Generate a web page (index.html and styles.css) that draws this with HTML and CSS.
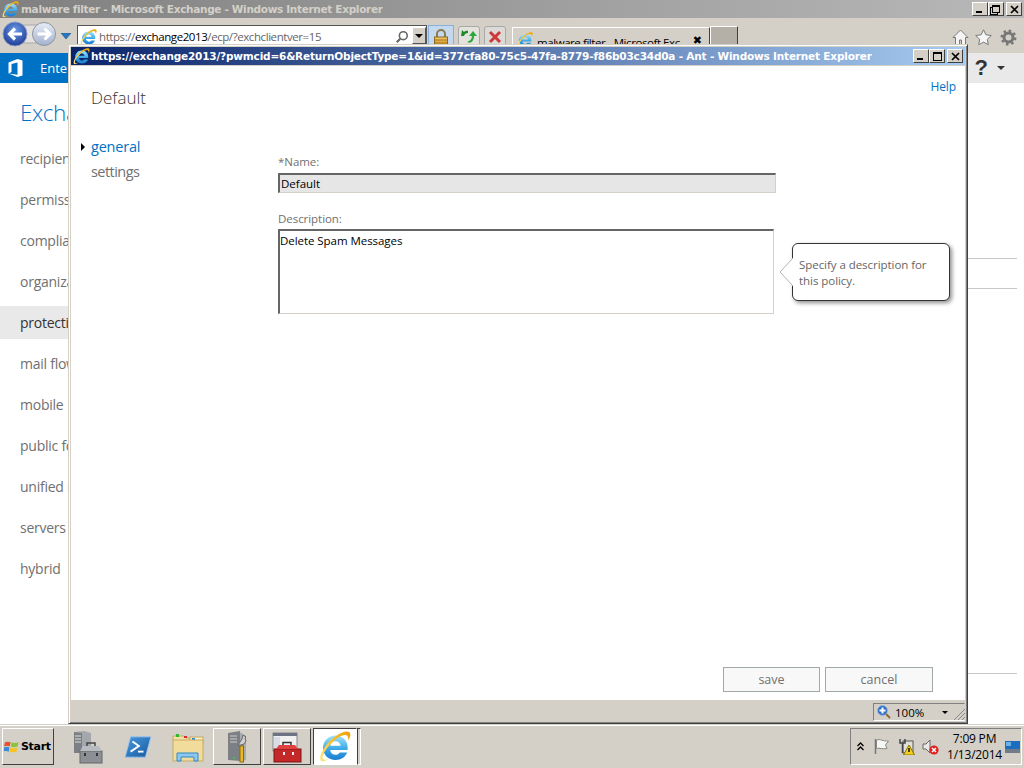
FILE: index.html
```html
<!DOCTYPE html>
<html lang="en">
<head>
<meta charset="utf-8">
<title>Default</title>
<link rel="stylesheet" href="styles.css">
</head>
<body>
<svg class="defs" width="0" height="0" aria-hidden="true">
  <defs>
    <linearGradient id="ieBlue" x1="0" y1="0" x2="0" y2="1"><stop offset="0" stop-color="#a4e4fc"/><stop offset=".55" stop-color="#3aa8e8"/><stop offset="1" stop-color="#1a7cd0"/></linearGradient>
    <linearGradient id="ieGold" x1="1" y1="0" x2="0" y2="1"><stop offset="0" stop-color="#f0a000"/><stop offset=".5" stop-color="#f8c430"/><stop offset="1" stop-color="#ffe680"/></linearGradient>
    <radialGradient id="navBlue" cx=".5" cy=".35" r=".75"><stop offset="0" stop-color="#6c9ce8"/><stop offset="1" stop-color="#142c88"/></radialGradient>
    <linearGradient id="navGray" x1="0" y1="0" x2="0" y2="1"><stop offset="0" stop-color="#e6ecf6"/><stop offset="1" stop-color="#a4b2d0"/></linearGradient>
    <linearGradient id="lockG" x1="0" y1="0" x2="0" y2="1"><stop offset="0" stop-color="#f2c86a"/><stop offset="1" stop-color="#c88a20"/></linearGradient>
    <linearGradient id="psG" x1="0" y1="0" x2="1" y2="1"><stop offset="0" stop-color="#4a9ae0"/><stop offset="1" stop-color="#16599c"/></linearGradient>
    <symbol id="ie" viewBox="0 0 32 32">
      <path d="M16.500 4.500C9.500 4.500 4 10 4 17s5.500 12 12.500 12c5.500 0 9.800-2.900 11.700-7.500h-7.400c-1 1.500-2.500 2.300-4.300 2.300-2.900 0-5-1.900-5.300-4.800h17.300c.1-.8.200-1.600.2-2.500C28.700 9.600 23.500 4.500 16.500 4.500zm-5.200 10.300c.4-2.700 2.500-4.500 5.200-4.500s4.800 1.800 5.200 4.500z" fill="url(#ieBlue)"/>
      <path d="M2.200 30.300C-.5 27.500 2.500 20 8.500 12.500 16 4 26-1.500 30 1c2.300 1.500 1.400 5-.7 8.500.1-2.800-.5-4.800-2-5.300-3.500-1.200-10.500 3-16.300 9.500-6 6.800-8.700 12.500-6.800 14.500 1 1 3 .7 5.800-.7-3.500 2.500-6.300 3.500-7.800 2.800z" fill="url(#ieGold)"/>
    </symbol>
  </defs>
</svg>

<div class="screen">
  <div class="browser">
    <div class="titlebar inactive">
      <svg class="ti"><use href="#ie"/></svg>
      <span class="title-text">malware filter - Microsoft Exchange - Windows Internet Explorer</span>
      <div class="winbtns">
        <span class="wb"><i class="g-min"></i></span><span class="wb"><i class="g-res"></i></span><span class="wb"><svg width="9" height="9" viewBox="0 0 9 9"><path d="M1 1l7 7M8 1L1 8" stroke="#000" stroke-width="1.700"/></svg></span>
      </div>
    </div>
    <div class="toolbar">
      <svg class="nav" width="60" height="30" viewBox="0 0 60 30">
        <rect x="12" y="6" width="32" height="18" rx="6" fill="#e4e2de" stroke="#a8a8a8"/>
        <circle cx="43" cy="15" r="11.500" fill="url(#navGray)" stroke="#8f949e"/>
        <path d="M36.500 15h12m-5-5.500l5.500 5.500-5.500 5.500" fill="none" stroke="#fff" stroke-width="3"/>
        <circle cx="14" cy="15" r="12" fill="url(#navBlue)" stroke="#8c9cc4"/>
        <path d="M21 15H8.500m5.500-5.500L8.500 15l5.500 5.500" fill="none" stroke="#fff" stroke-width="3.200"/>
      </svg>
      <svg class="drop" width="10" height="6" viewBox="0 0 10 6"><path d="M0 0h10L5 6z" fill="#2a78c0" stroke="#10508c" stroke-width=".6"/></svg>
      <div class="addr">
        <svg class="addr-ie"><use href="#ie"/></svg>
        <span class="url">https://<b>exchange2013</b><em>/ecp/?exchclientver=15</em></span>
        <svg class="mag" width="14" height="16" viewBox="0 0 16 16"><circle cx="9.500" cy="6.500" r="4.500" fill="#fff" stroke="#666" stroke-width="1.800"/><path d="M6 10l-4 4" stroke="#666" stroke-width="2.400"/></svg>
        <span class="addr-drop"><i class="tri"></i></span>
      </div>
      <div class="lock">
        <svg width="16" height="20" viewBox="0 0 16 20"><path d="M4 9V6a4 4 0 0 1 8 0v3" fill="none" stroke="#8a7a50" stroke-width="2"/><rect x="1.500" y="9" width="13" height="10" fill="url(#lockG)" stroke="#8a6a20"/><path d="M2 12h12M2 15h12" stroke="#a87818"/></svg>
      </div>
      <div class="tbtn"><svg width="16" height="15" viewBox="0 0 16 15"><path d="M7 3C5 3 3.500 4 3 6H0l1-6 2 2C4 1 6 .5 7 1z" fill="#1f8a2c"/><path d="M13 6l3 0-4-5-4 5h3c0 3-2 5-5 6 4 2 7-1 7-6z" fill="#2aa83a"/></svg></div>
      <div class="tbtn stop"><svg width="14" height="14" viewBox="0 0 14 14"><path d="M2 2l10 10M12 2L2 12" stroke="#cc3a3a" stroke-width="3"/></svg></div>
      <div class="tab">
        <svg class="tab-ie"><use href="#ie"/></svg>
        <span class="tab-text">malware filter - Microsoft Exc</span>
        <span class="tab-x">✖</span>
      </div>
      <div class="newtab"></div>
      <div class="tools">
        <svg width="17" height="17" viewBox="0 0 17 17"><path d="M8.500 1L1 8.500h2.500V16h4v-5h2v5h4V8.500H16z" fill="#f4f4f4" stroke="#7a7a7a"/></svg>
        <svg width="17" height="17" viewBox="0 0 17 17"><path d="M8.500 .8l2.400 5 5.400.7-4 3.800 1 5.400-4.800-2.600-4.800 2.600 1-5.400-4-3.800 5.400-.7z" fill="#f6f6f6" stroke="#7a7a7a"/></svg>
        <svg width="17" height="17" viewBox="0 0 17 17"><circle cx="8.500" cy="8.500" r="4.500" fill="none" stroke="#777" stroke-width="3"/><circle cx="8.500" cy="8.500" r="6.800" fill="none" stroke="#777" stroke-width="2.400" stroke-dasharray="2.500 2.840"/></svg>
      </div>
    </div>
    <div class="page">
      <div class="o365">
        <div class="o365-left">
          <svg class="office" width="17" height="18" viewBox="0 0 16 18"><path d="M1 3.500L10 0l5 1.500v15L10 18 1 14.500l9 1.200V3.500L4 5v8l-3 1.500z" fill="#fff"/></svg>
          <span class="ent">Enterprise</span>
        </div>
        <div class="o365-right"><span class="help-q">?</span><i class="help-tri"></i></div>
      </div>
      <div class="content">
        <nav class="side">
          <h1>Exchange admin center</h1>
          <ul>
            <li>recipients</li>
            <li>permissions</li>
            <li>compliance management</li>
            <li>organization</li>
            <li class="sel">protection</li>
            <li>mail flow</li>
            <li>mobile</li>
            <li>public folders</li>
            <li>unified messaging</li>
            <li>servers</li>
            <li>hybrid</li>
          </ul>
        </nav>
        <div class="rlines"><hr class="r1"><hr class="r2"><hr class="r3"></div>
      </div>
    </div>
  </div>

  <div class="taskbar">
    <button class="start">
      <svg width="16" height="14" viewBox="0 0 17 15"><path d="M1 2.500c2-1 4-1 6 0L6 7c-2-1-4-1-6 0z" fill="#e8502a"/><path d="M8 2.500c2 1 4 1 7.500 0L14.500 7c-3 1-5 1-7.500 0z" fill="#8cc43c"/><path d="M0 8c2-1 4-1 5.800 0L5 12.500c-2-1-4-1-6 0z" fill="#3a8ad8"/><path d="M6.800 8c2 1 4.500 1 7.500 0l-1 4.500c-3 1-5 1-7.300 0z" fill="#f6c228"/></svg>
      <span>Start</span>
    </button>
    <div class="apps">
      <span class="app"><svg width="30" height="34" viewBox="0 0 30 34"><path d="M1 2l10-1 7 2v20H1z" fill="#a4a8ac"/><path d="M1 2l8 1v20H1z" fill="#7c8084"/><path d="M2 6h6M2 9h6M2 12h6" stroke="#ddd"/><rect x="7" y="21" width="22" height="12" fill="#8c9094" stroke="#666"/><path d="M7 21h22l-3-5H10z" fill="#b8bcc0"/><path d="M14 16v-3h8v3" fill="none" stroke="#444" stroke-width="1.500"/><rect x="11" y="23" width="2" height="3" fill="#333"/><rect x="23" y="23" width="2" height="3" fill="#333"/></svg></span>
      <span class="app"><svg width="28" height="24" viewBox="0 0 30 26"><path d="M7 2h22l-6 22H1z" fill="url(#psG)" stroke="#9cc4ec"/><path d="M9 7l7 5-9 6" fill="none" stroke="#fff" stroke-width="2"/><path d="M15 18h6" stroke="#fff" stroke-width="2"/></svg></span>
      <span class="app"><svg width="32" height="30" viewBox="0 0 32 30"><path d="M1 4h11l2 2h13v3H1z" fill="#f4e0a4" stroke="#c4a860"/><rect x="18" y="5" width="13" height="6" fill="#faeec4" stroke="#c4a860"/><rect x="4" y="2" width="3" height="3" fill="#2eb82e"/><rect x="12" y="4" width="3" height="2" fill="#d83028"/><rect x="20" y="6" width="3" height="2" fill="#2a88d8"/><path d="M1 8h30v21H1z" fill="#f2dc9c" stroke="#c8ac60"/><path d="M5 29v-8h21v8h-4v-4H9v4z" fill="#8cc8f0" stroke="#3088c8"/></svg></span>
      <span class="app raised"><svg width="20" height="34" viewBox="0 0 20 34"><path d="M1 3l12-2v30l-12-1z" fill="#7c8084"/><path d="M3 6h7M3 9h7M3 12h7" stroke="#ccc"/><circle cx="7" cy="28" r="1" fill="#3c3"/><path d="M13 2l6 4v24l-6 2z" fill="#a8acb0"/><path d="M11 15l4-6 1-4 3 2-1 1 1 3-2 3-3 1z" fill="#d0d0d0" stroke="#666"/><rect x="13" y="16" width="3.500" height="16" fill="#e8b828" stroke="#8a6a10"/></svg></span>
      <span class="app raised"><svg width="30" height="32" viewBox="0 0 30 32"><rect x="1" y="2" width="24" height="18" fill="#f0f0f0" stroke="#888"/><rect x="1" y="2" width="24" height="3" fill="#6c7484"/><rect x="2" y="6" width="6" height="13" fill="#d8dce4"/><rect x="2" y="18" width="27" height="13" fill="#c42828" stroke="#7c1414"/><path d="M4 18l3-4h16l3 4z" fill="#e04040"/><path d="M11 14v-2.500h8V14" fill="none" stroke="#333" stroke-width="1.500"/><rect x="11" y="21" width="2" height="3" fill="#eee"/><rect x="20" y="21" width="2" height="3" fill="#eee"/></svg></span>
      <span class="app active"><svg width="32" height="32"><use href="#ie"/></svg></span>
      <span class="sliver"></span>
    </div>
    <div class="tray">
      <svg width="7" height="9" viewBox="0 0 7 9"><path d="M.5 4l3-3 3 3M.5 8l3-3 3 3" fill="none" stroke="#000" stroke-width="1.300"/></svg>
      <svg class="t1" width="16" height="17" viewBox="0 0 16 17"><path d="M1.500 1v15" stroke="#777" stroke-width="1.500"/><path d="M2.500 2c4-1.500 6 1.500 12 1l-3 4 1.500 3.500c-5 1-7-1-10.500 0z" fill="#f6f6f2" stroke="#888"/></svg>
      <svg class="t2" width="17" height="17" viewBox="0 0 17 17"><rect x="5" y="3" width="10" height="12" fill="#e0e0d8" stroke="#555"/><path d="M2 1v4h5V1M4.500 5v10" fill="none" stroke="#444" stroke-width="1.500"/><path d="M11 7l5.500 10h-11z" fill="#f6d020" stroke="#8a7000"/><path d="M11 10v4" stroke="#000" stroke-width="1.400"/></svg>
      <svg class="t3" width="17" height="16" viewBox="0 0 17 16"><path d="M1 5h3l4-4v13L4 10H1z" fill="#e8e8e8" stroke="#666"/><circle cx="12" cy="11" r="4.600" fill="#e02020"/><path d="M10 9l4 4M14 9l-4 4" stroke="#fff" stroke-width="1.500"/></svg>
      <div class="clock"><span>7:09 PM</span><span>1/13/2014</span></div>
      <svg class="showdesk" width="15" height="12" viewBox="0 0 15 12"><rect width="15" height="12" fill="#1c6cc0"/><rect y="8" width="15" height="4" fill="#707c88"/><rect x="1" y="1" width="5" height="4" fill="#6cb0e8"/></svg>
    </div>
  </div>

  <section class="popup">
    <div class="titlebar active">
      <svg class="ti"><use href="#ie"/></svg>
      <span class="title-text">https://exchange2013/?pwmcid=6&amp;ReturnObjectType=1&amp;id=377cfa80-75c5-47fa-8779-f86b03c34d0a - Ant - Windows Internet Explorer</span>
      <div class="winbtns">
        <span class="wb"><i class="g-min"></i></span><span class="wb"><i class="g-max"></i></span><span class="wb"><svg width="9" height="9" viewBox="0 0 9 9"><path d="M1 1l7 7M8 1L1 8" stroke="#000" stroke-width="1.700"/></svg></span>
      </div>
    </div>
    <div class="client">
      <div class="help-row"><a class="help">Help</a></div>
      <h2>Default</h2>
      <div class="form-area">
        <ul class="tabs">
          <li class="on">general</li>
          <li>settings</li>
        </ul>
        <form class="form">
          <label class="lbl">*Name:</label>
          <div class="input">Default</div>
          <label class="lbl lbl2">Description:</label>
          <div class="desc-row">
            <div class="textarea">Delete Spam Messages</div>
            <div class="tip">
              <svg class="tip-arrow" width="15" height="30" viewBox="0 0 15 30"><path d="M14 1L1 15l13 14" fill="#fff" stroke="#b4b4ac"/></svg>
              Specify a description for this policy.
            </div>
          </div>
        </form>
      </div>
      <div class="actions">
        <button class="btn save">save</button>
        <button class="btn cancel">cancel</button>
      </div>
    </div>
    <div class="status">
      <div class="zoom">
        <svg width="14" height="14" viewBox="0 0 14 14"><circle cx="5.500" cy="5.500" r="5" fill="#2a70c8" stroke="#a0b8d8"/><path d="M5.500 2.500v6M2.500 5.500h6" stroke="#fff" stroke-width="2"/><path d="M9 9l4 4" stroke="#8a6a3a" stroke-width="2"/></svg>
        <span>100%</span>
        <i class="zoom-tri"></i>
      </div>
      <svg class="grip" width="12" height="12" viewBox="0 0 12 12"><path d="M12 1L1 12M12 5L5 12M12 9l-3 3" stroke="#888"/></svg>
    </div>
  </section>
</div>
</body>
</html>
```

FILE: styles.css
```css
* { box-sizing: border-box; }
html, body { margin: 0; padding: 0; overflow: hidden; }
body { background: #fff; font-family: "Open Sans", "Liberation Sans", sans-serif; }
.defs { position: absolute; }
ul { list-style: none; margin: 0; padding: 0; }
.screen { position: relative; width: 1024px; height: 768px; overflow: hidden; display: flex; flex-direction: column; }

/* browser window */
.browser { height: 725px; display: flex; flex-direction: column; flex: none; border-bottom: 1px solid #d4d0c8; }
.titlebar { display: flex; align-items: center; flex: none; height: 18px; }
.titlebar.inactive { background: linear-gradient(90deg, #808080, #b8b8b8); }
.titlebar.active { background: linear-gradient(90deg, #0a246a, #a6caf0); }
.ti { width: 17px; height: 17px; flex: none; margin: 0 2px 0 2px; }
.title-text { font: bold 10.500px/18px "DejaVu Sans", sans-serif; white-space: nowrap; letter-spacing: -.32px; overflow: hidden; }
.inactive .title-text { color: #d4d0c8; }
.active .title-text { color: #fff; }
.winbtns { margin-left: auto; display: flex; padding-right: 2px; flex: none; }
.wb { width: 16px; height: 14px; background: #d4d0c8; border: 1px solid; border-color: #fff #404040 #404040 #fff; display: flex; align-items: center; justify-content: center; }
.winbtns .wb:last-child { margin-left: 2px; }
.g-min { display: block; width: 6px; height: 2px; background: #000; margin-top: 6px; margin-right: 2px; }
.g-max { display: block; width: 9px; height: 9px; border: 1px solid #000; border-top-width: 2px; }
.g-res { display: block; width: 8px; height: 8px; border: 1px solid #000; border-top-width: 2px; box-shadow: -2px 2px 0 -1px #d4d0c8, -2px 2px 0 0 #000; }

.toolbar { height: 35px; flex: none; background: #d4d0c8; display: flex; align-items: flex-start; padding-left: 1px; }
.nav { margin-top: 1px; flex: none; }
.drop { margin: 15px 0 0 0; flex: none; }
.addr { width: 350px; height: 28px; margin: 7px 0 0 6px; flex: none; background: #fff; border: 1px solid; border-color: #555 #555 #fff #555; display: flex; align-items: flex-start; }
.addr-ie { width: 17px; height: 17px; margin: 3px 2px 0 2px; flex: none; }
.url { font: 11.500px/18px "Open Sans", sans-serif; color: #666; margin-top: 2px; white-space: nowrap; letter-spacing: -.42px; flex: 1; }
.url b { font-weight: 400; color: #000; }
.url em { font-style: normal; color: #666; }
.mag { margin: 3px 3px 0 0; flex: none; }
.addr-drop { width: 14px; height: 17px; margin: 1px 0 0 0; flex: none; background: #d4d0c8; border: 1px solid; border-color: #fff #555 #555 #fff; display: flex; align-items: center; justify-content: center; }
.tri { width: 0; height: 0; border: 4px solid transparent; border-top: 4px solid #000; border-bottom: 0; }
.lock { width: 26px; height: 26px; margin: 7px 0 0 1px; flex: none; background: #c4d8ee; border: 1px solid #8ab0d8; display: flex; justify-content: center; padding-top: 2px; }
.tbtn { width: 22px; height: 24px; margin: 8px 0 0 4px; flex: none; background: #e4e2dc; border: 1px solid #a8a8a8; border-radius: 3px; display: flex; justify-content: center; padding-top: 3px; }
.tbtn.stop { background: #dcdad6; }
.tab { width: 198px; height: 30px; margin: 9px 0 0 6px; flex: none; border: 1px solid; border-color: #fff #404040 transparent #fff; border-width: 1px 1px 0 1px; display: flex; align-items: flex-start; overflow: hidden; }
.tab-ie { width: 16px; height: 16px; margin: 4px 4px 0 4px; flex: none; }
.tab-text { font: 11.500px/18px "Open Sans", sans-serif; color: #000; margin-top: 6px; white-space: nowrap; letter-spacing: -.43px; flex: none; }
.tab-x { font: bold 11px/12px "DejaVu Sans", sans-serif; color: #000; margin: 7px 0 0 13px; flex: none; }
.newtab { width: 28px; height: 27px; margin: 8px 0 0 0; flex: none; background: #b4b0a8; border: 1px solid; border-color: #fff #404040 #404040 #fff; }
.tools { margin: 11px 0 0 auto; display: flex; padding-right: 7px; }
.tools svg + svg { margin-left: 6px; }
.tools svg:last-child { margin-left: 8px; }

/* page behind */
.page { flex: 1; display: flex; flex-direction: column; background: #fff; }
.o365 { height: 30px; flex: none; background: #e9e9ea; display: flex; justify-content: space-between; }
.o365-left { width: 68px; background: #0072c6; display: flex; align-items: center; overflow: hidden; white-space: nowrap; }
.office { margin-left: 7px; flex: none; }
.ent { font-size: 13px; color: #fff; margin-left: 16px; }
.o365-right { display: flex; align-items: center; padding-right: 19px; }
.help-q { font: bold 22px/30px "Liberation Sans", sans-serif; color: #333; }
.help-tri { width: 0; height: 0; border: 4px solid transparent; border-top: 4px solid #333; border-bottom: 0; margin-left: 9px; }
.content { flex: 1; display: flex; justify-content: space-between; }
.side { width: 68px; overflow: hidden; white-space: nowrap; }
.side h1 { font-size: 22.500px; line-height: 30px; font-weight: 300; letter-spacing: -.4px; color: #0072c6; margin: 15px 0 14px 20px; }
.side li { height: 33px; margin-bottom: 8px; padding-left: 20px; font-size: 14px; letter-spacing: -.25px; line-height: 33px; color: #707070; }
.side li.sel { background: #e9e9ea; color: #333; }
.rlines { width: 56px; padding-top: 175px; margin-right: 7px; }
.rlines hr { border: 0; height: 1px; background: #c8c8c8; margin: 0; }
.rlines .r2 { margin-top: 29px; }
.rlines .r3 { margin-top: 384px; }

/* taskbar */
.taskbar { flex: 1; background: #d4d0c8; border-top: 1px solid #fff; display: flex; align-items: flex-start; padding: 2px 0 0 2px; }
.start { width: 52px; height: 37px; background: #d4d0c8; border: 1px solid; border-color: #fff #404040 #404040 #fff; display: flex; align-items: center; padding: 0 0 0 1px; gap: 1px; font: bold 11px "DejaVu Sans", sans-serif; color: #000; letter-spacing: -.3px; flex: none; }
.apps { display: flex; margin-left: 9px; }
.app { width: 50px; height: 37px; display: flex; align-items: center; justify-content: center; flex: none; }
.app.raised { width: 48px; margin-right: 2px; border: 1px solid; border-color: #fff #404040 #404040 #fff; }
.app.active { width: 44px; background: #fff; border: 1px solid; border-color: #404040 #fff #fff #404040; }
.sliver { width: 4px; height: 37px; border: 1px solid; border-color: #404040 #fff #fff #404040; }
.tray { margin-left: auto; width: 172px; height: 37px; border: 1px solid; border-color: #808080 #fff #fff #808080; display: flex; align-items: center; padding-left: 6px; margin-right: 2px; flex: none; }
.t1 { margin-left: 10px; }
.t2 { margin-left: 8px; }
.t3 { margin-left: 7px; }
.clock { display: flex; flex-direction: column; align-items: center; width: 59px; margin-left: 6px; padding-top: 1px; font: 12px/16px "Open Sans", sans-serif; color: #000; letter-spacing: -.2px; white-space: nowrap; }
.showdesk { margin-left: 1px; }

/* popup */
.popup { position: absolute; left: 68px; top: 44px; width: 900px; height: 680px; background: #d4d0c8; border: 1px solid; border-color: #d4d0c8 #404040 #404040 #d4d0c8; box-shadow: inset 1px 1px 0 #fff, inset -1px -1px 0 #808080; padding: 2px; display: flex; flex-direction: column; }
.popup .ti { margin: 0 1px 0 2px; }
.popup .title-text { letter-spacing: -.185px; }
.client { flex: 1; background: #fff; margin-top: 1px; display: flex; flex-direction: column; min-height: 0; }
.help-row { height: 0; display: flex; justify-content: flex-end; }
.help { font-size: 12px; letter-spacing: -.1px; line-height: 16px; color: #0072c6; margin: 13px 9px 0 0; height: 16px; }
.client h2 { margin: 20px 0 0 20px; font-size: 17px; line-height: 24px; font-weight: 300; color: #333; }
.form-area { display: flex; margin-top: 24px; flex: 1; min-height: 0; }
.tabs { width: 207px; flex: none; padding-left: 20px; }
.tabs li { font-size: 14.500px; letter-spacing: -.55px; line-height: 25px; color: #707070; position: relative; }
.tabs li.on { color: #0072c6; letter-spacing: -.2px; }
.tabs li.on::before { content: ""; position: absolute; left: -10px; top: 9px; border-left: 4px solid #000; border-top: 4px solid transparent; border-bottom: 4px solid transparent; }
.form { padding-top: 20px; font-size: 12px; }
.lbl { display: block; line-height: 16px; color: #707070; font-size: 11.500px; letter-spacing: -.05px; }
.lbl2 { margin-top: 18px; }
.input { width: 498px; height: 20px; margin-top: 3px; background: #e6e6e6; border: 1px solid; border-color: #666 #d4d0c8 #d4d0c8 #666; border-width: 2px 1px 1px 2px; font-size: 11.500px; line-height: 17px; padding-left: 1px; color: #000; }
.desc-row { display: flex; align-items: flex-start; margin-top: 2px; }
.textarea { width: 496px; height: 85px; background: #fff; border: 1px solid; border-color: #666 #d4d0c8 #d4d0c8 #666; border-width: 2px 1px 1px 2px; font-size: 11.500px; letter-spacing: -.05px; line-height: 17px; padding: 1px 0 0 0; color: #000; }
.tip { position: relative; width: 158px; height: 58px; margin: 14px 0 0 18px; background: #fff; border: 1px solid #333; border-radius: 6px; box-shadow: 2px 2px 4px rgba(0,0,0,.45); padding: 13px 6px 0 6px; font-size: 11.500px; letter-spacing: -.05px; line-height: 16px; color: #666; }
.tip-arrow { position: absolute; left: -14px; top: 13px; }
.actions { flex: none; display: flex; justify-content: flex-end; gap: 5px; padding: 0 32px 8px 0; }
.btn { height: 25px; background: #f8f8f8; border: 1px solid #a0a8a8; color: #707070; font: 12.500px "Open Sans", sans-serif; padding: 0; }
.save { width: 97px; }
.cancel { width: 108px; }
.status { height: 21px; flex: none; display: flex; justify-content: flex-end; align-items: flex-end; }
.zoom { width: 92px; height: 18px; border: 1px solid; border-color: #808080 transparent #fff #808080; display: flex; align-items: center; padding-left: 3px; gap: 4px; font: 11.500px "Open Sans", sans-serif; color: #000; }
.zoom-tri { width: 0; height: 0; border: 3px solid transparent; border-top: 3px solid #000; border-bottom: 0; margin-left: 14px; }
.grip { margin-bottom: 1px; margin-left: -12px; }
```
